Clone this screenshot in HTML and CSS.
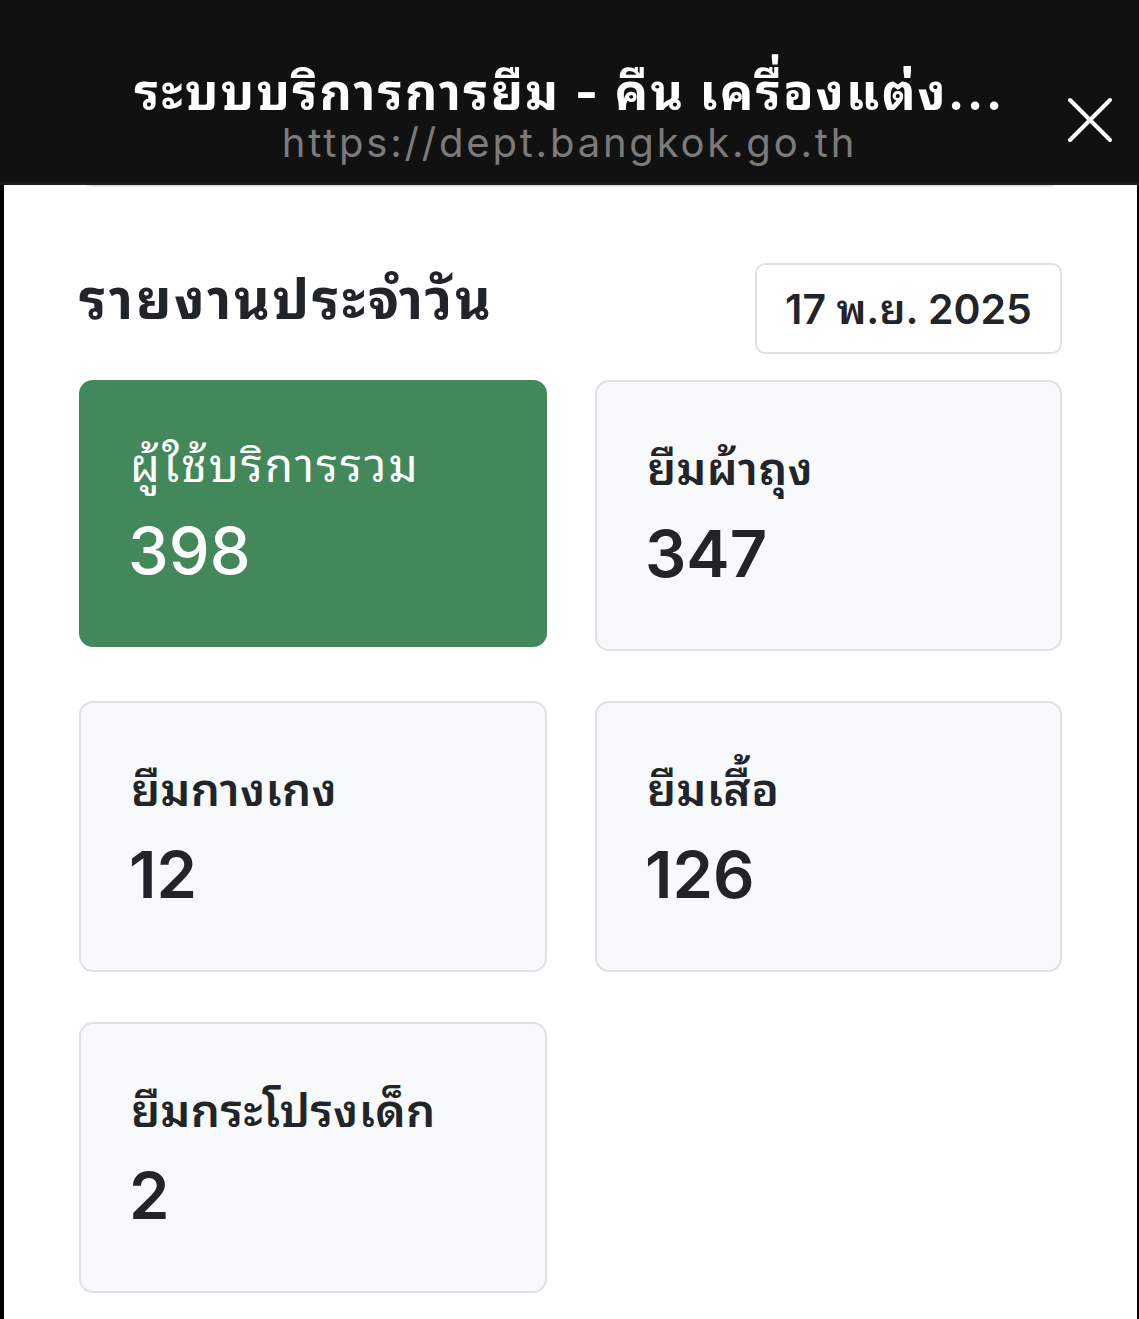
FILE: index.html
```html
<!DOCTYPE html>
<html lang="th">
<head>
<meta charset="utf-8">
<title>รายงานประจำวัน</title>
<link rel="stylesheet" href="styles.css">
</head>
<body>
<header class="topbar">
  <div class="spacer"></div>
  <div class="titles">
    <div class="page-title">ระบบบริการการยืม - คืน เครื่องแต่ง...</div>
    <div class="page-url">https://dept.bangkok.go.th</div>
  </div>
  <div class="close-wrap">
    <svg class="close" width="46" height="46" viewBox="0 0 46 46" aria-hidden="true">
      <path d="M3 3 L43 43 M43 3 L3 43" stroke="#ffffff" stroke-width="4" stroke-linecap="round" fill="none"/>
    </svg>
  </div>
</header>
<div class="topline"></div>
<main class="content">
  <div class="prev-card"></div>
  <div class="report-head">
    <h1 class="report-title">รายงานประจำวัน</h1>
    <div class="date-box">17 พ.ย. 2025</div>
  </div>
  <section class="stats">
    <div class="stat stat-primary">
      <div class="stat-label">ผู้ใช้บริการรวม</div>
      <div class="stat-value">398</div>
    </div>
    <div class="stat">
      <div class="stat-label">ยืมผ้าถุง</div>
      <div class="stat-value">347</div>
    </div>
    <div class="stat">
      <div class="stat-label">ยืมกางเกง</div>
      <div class="stat-value">12</div>
    </div>
    <div class="stat">
      <div class="stat-label">ยืมเสื้อ</div>
      <div class="stat-value">126</div>
    </div>
    <div class="stat">
      <div class="stat-label">ยืมกระโปรงเด็ก</div>
      <div class="stat-value">2</div>
    </div>
  </section>
</main>
</body>
</html>
```
FILE: styles.css
```css
* { box-sizing: border-box; }
html, body { margin: 0; padding: 0; }
body {
  background: #000;
  font-family: "Inter", "Noto Sans Thai Looped", "Sarabun", "Loma", "Garuda", "Tlwg Typo", "Norasi", "Noto Sans Thai", "Noto Sans", "DejaVu Sans", sans-serif;
  color: #212529;
  width: 1139px;
  height: 1319px;
  overflow: hidden;
}
.topbar {
  position: relative;
  z-index: 2;
  height: 182px;
  background: #111111;
  display: grid;
  grid-template-columns: 1fr auto 1fr;
  align-items: start;
}
.titles {
  padding-top: 63px;
  text-align: center;
}
.page-title {
  color: #ffffff;
  font-weight: 700;
  font-size: 50px;
  line-height: 58px;
  letter-spacing: 2.3px;
  white-space: nowrap;
}
.page-url {
  color: #7b7b7b;
  font-size: 40px;
  line-height: 43px;
  letter-spacing: 2.8px;
  white-space: nowrap;
}
.close-wrap {
  justify-self: end;
  padding-top: 97px;
  padding-right: 26px;
}
.close { display: block; }
.topline {
  position: relative;
  z-index: 2;
  height: 3px;
  background: #1d1d1d;
}
.content {
  display: flow-root;
  background: #ffffff;
  margin: 0 2px 0 4px;
  height: 1134px;
  padding: 0 75px;
}
.prev-card {
  height: 20px;
  margin-top: -18px;
  border: 2px solid #e1e3e6;
  border-top: 0;
  border-radius: 0 0 14px 14px;
  background: #f8f9fa;
}
.report-head {
  display: flex;
  justify-content: space-between;
  align-items: center;
  margin-top: 76px;
}
.report-title {
  margin: 0;
  font-size: 55px;
  font-weight: 700;
  line-height: 64px;
  letter-spacing: 2.6px;
  padding-bottom: 20px;
}
.date-box {
  width: 307px;
  height: 91px;
  border: 2px solid #dee2e6;
  border-radius: 10px;
  display: flex;
  align-items: center;
  justify-content: center;
  padding-bottom: 6px;
  font-size: 41px;
  font-weight: 600;
}
.stats {
  margin-top: 26px;
  display: grid;
  grid-template-columns: 468px 467px;
  column-gap: 48px;
  row-gap: 50px;
  align-items: start;
}
.stat {
  height: 271px;
  background: #f8f9fa;
  border: 2px solid #dee2e6;
  border-radius: 14px;
  padding: 56px 50px 0;
}
.stat-primary {
  height: 267px;
  background: #42885b;
  border: 0;
  color: #ffffff;
  padding: 55px 51px 0;
}
.stat-label {
  font-size: 46px;
  font-weight: 600;
  line-height: 60px;
  letter-spacing: 0.4px;
}
.stat-primary .stat-label {
  font-weight: 400;
  letter-spacing: 2.2px;
}
.stat-value {
  font-size: 65px;
  font-weight: 600;
  line-height: 80px;
  margin-top: 16px;
  margin-left: -2px;
}
.stat-primary .stat-value { font-weight: 500; }
```
